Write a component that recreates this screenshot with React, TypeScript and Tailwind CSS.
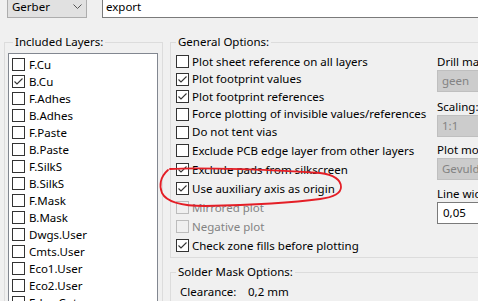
import React from 'react';

const layers = [
  'F.Cu', 'B.Cu', 'F.Adhes', 'B.Adhes', 'F.Paste', 'B.Paste', 'F.SilkS', 'B.SilkS',
  'F.Mask', 'B.Mask', 'Dwgs.User', 'Cmts.User', 'Eco1.User', 'Eco2.User', 'Edge.Cuts', 'Margin',
];

const options = [
  { label: 'Plot sheet reference on all layers', checked: false, row: 'h-[17px]' },
  { label: 'Plot footprint values', checked: true, row: 'h-[18px]' },
  { label: 'Plot footprint references', checked: true, row: 'h-[17px]' },
  { label: 'Force plotting of invisible values/references', checked: false, row: 'h-[18px]' },
  { label: 'Do not tent vias', checked: false, row: 'h-[18px]' },
  { label: 'Exclude PCB edge layer from other layers', checked: false, row: 'h-[19px]' },
  { label: 'Exclude pads from silkscreen', checked: true, row: 'h-[19px]' },
  { label: 'Use auxiliary axis as origin', checked: true, row: 'h-[19px]' },
  { label: 'Mirrored plot', checked: false, disabled: true, row: 'h-[19px]' },
  { label: 'Negative plot', checked: false, disabled: true, row: 'h-[19px]' },
  { label: 'Check zone fills before plotting', checked: true, row: 'h-[19px]' },
];

function CheckBox({ checked, disabled }: { checked?: boolean; disabled?: boolean }) {
  return (
    <span
      className={`w-[13px] h-[13px] shrink-0 border flex items-center justify-center ${
        disabled ? 'border-[#bcbcbc] bg-transparent' : 'border-[#333333] bg-white'
      }`}
    >
      {checked && (
        <svg width="11" height="11" viewBox="0 0 11 11">
          <polyline points="1.5,5.5 4,8 9.5,2.5" fill="none" stroke="#333333" strokeWidth="1.1" />
        </svg>
      )}
    </span>
  );
}

function Combo({ value, disabled }: { value: string; disabled?: boolean }) {
  return (
    <div
      className={`h-[22px] w-[110px] border flex items-center pl-[4px] ${
        disabled ? 'bg-[#cccccc] border-[#bfbfbf] text-[#838383]' : 'bg-[#e1e1e1] border-[#adadad]'
      }`}
    >
      {value}
    </div>
  );
}

export default function App() {
  return (
    <div className="relative w-[478px] h-[301px] overflow-hidden bg-[#f0f0f0] text-black text-[11.5px] leading-[16px] font-['Noto_Sans',sans-serif] select-none">
      {/* format + output directory */}
      <div className="flex items-center h-[23px] -mt-[5px]">
        <div className="ml-[7px] w-[80px] shrink-0 h-[23px] bg-[#e1e1e1] border border-[#adadad] flex items-center pl-[4px] pr-[4px]">
          <span className="flex-1">Gerber</span>
          <svg width="9" height="5" viewBox="0 0 9 5">
            <polyline points="0.5,0.5 4.5,4.5 8.5,0.5" fill="none" stroke="#555" strokeWidth="1" />
          </svg>
        </div>
        <div className="ml-[15px] w-[400px] shrink-0 h-[23px] bg-white border border-[#7a7a7a] flex items-center pl-[3px]">
          export
        </div>
      </div>

      <div className="flex mt-[16px]">
        {/* Included layers */}
        <fieldset className="ml-[4px] w-[159px] shrink-0 h-[300px] border border-[#dcdcdc] pl-[3px] pr-[4px]">
          <legend className="ml-[5px] px-[2px] whitespace-nowrap">Included Layers:</legend>
          <div className="mt-[3px] h-[260px] bg-white border border-[#828790] pt-[2px] pl-[3px] overflow-hidden">
            {layers.map((l) => (
              <div key={l} className="h-[17px] flex items-center gap-[4px]">
                <CheckBox checked={l === 'B.Cu'} />
                <span>{l}</span>
              </div>
            ))}
          </div>
        </fieldset>

        <div className="ml-[7px] shrink-0 flex flex-col">
          {/* General options */}
          <fieldset className="w-[340px] h-[224px] border border-[#dcdcdc]">
            <legend className="ml-[5px] px-[2px] whitespace-nowrap">General Options:</legend>
            <div className="flex">
              <div className="w-[266px] shrink-0 pl-[5px] pt-[3px]">
                {options.map((o) => (
                  <div key={o.label} className={`${o.row} flex items-center gap-[3px] whitespace-nowrap`}>
                    <CheckBox checked={o.checked} disabled={o.disabled} />
                    <span className={o.disabled ? 'text-[#838383]' : ''}>{o.label}</span>
                  </div>
                ))}
              </div>
              <div className="flex flex-col pt-[4px] whitespace-nowrap">
                <span>Drill marks:</span>
                <Combo value="geen" disabled />
                <span className="mt-[7px]">Scaling:</span>
                <Combo value="1:1" disabled />
                <span className="mt-[5px]">Plot mode:</span>
                <Combo value="Gevuld" disabled />
                <span className="mt-[6px]">Line width:</span>
                <div className="h-[22px] w-[110px] bg-white border border-[#7a7a7a] flex items-center pl-[5px]">0,05</div>
              </div>
            </div>
          </fieldset>

          {/* Solder mask */}
          <fieldset className="mt-[6px] w-[340px] h-[80px] border border-[#dcdcdc] pl-[9px]">
            <legend className="-ml-[4px] px-[2px] whitespace-nowrap">Solder Mask Options:</legend>
            <div className="mt-[4px] flex">
              <span className="w-[68px]">Clearance:</span>
              <span>0,2 mm</span>
            </div>
          </fieldset>
        </div>
      </div>

      {/* hand-drawn red mark */}
      <svg className="absolute inset-0 pointer-events-none" width="478" height="301" viewBox="0 0 478 301">
        <path
          d="M170 169 C 200 167, 280 170, 320 173 C 335 175, 341 180, 341 187 C 341 193, 335 197, 320 199 C 290 203, 250 205, 205 206 C 180 206, 166 201, 162 193 C 159 186, 160 177, 168 170"
          fill="none"
          stroke="#e41e26"
          strokeWidth="1.8"
          strokeLinecap="round"
        />
      </svg>
    </div>
  );
}
